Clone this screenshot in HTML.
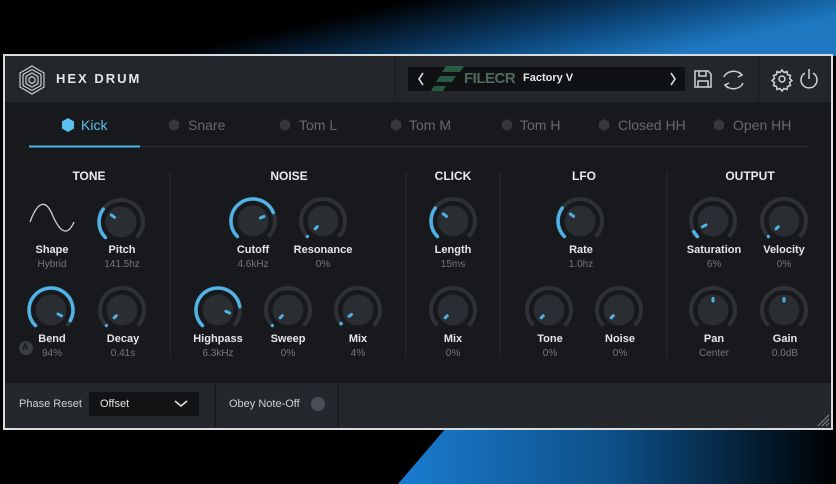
<!DOCTYPE html>
<html><head><meta charset="utf-8"><style>
*{margin:0;padding:0;box-sizing:border-box}
body{width:836px;height:484px;overflow:hidden;background:#000;font-family:"Liberation Sans",sans-serif;position:relative}
.t{position:absolute;white-space:nowrap}
.c{transform:translateX(-50%)}
.h{color:#e8eaec;font-weight:bold;font-size:12px}
.n{color:#e4e6e8;font-weight:bold;font-size:11px}
.v{color:#73787e;font-size:10px}
.tab{color:#656a70;font-size:14px}
</style></head><body>
<svg width="836" height="484" style="position:absolute;left:0;top:0">
<defs>
<linearGradient id="gt" x1="0" y1="0" x2="1" y2="0.3"><stop offset="0.45" stop-color="#000"/><stop offset="0.8" stop-color="#0d4a80"/><stop offset="1" stop-color="#1d78c0"/></linearGradient>
<linearGradient id="gb" x1="0" y1="0" x2="1" y2="0"><stop offset="0" stop-color="#1a7cd0"/><stop offset="0.5" stop-color="#0d4f86"/><stop offset="1" stop-color="#000"/></linearGradient>
<symbol id="kb" viewBox="-26 -26 52 52" overflow="visible">
<path d="M-15.56 15.56 A22 22 0 1 1 15.56 15.56" fill="none" stroke="#2e3135" stroke-width="4"/>
<circle r="15.5" fill="#2a2d31" stroke="none"/>
</symbol>
</defs>
<rect x="0" y="0" width="836" height="56" fill="url(#gt)"/>
<polygon points="398,484 446,428 836,428 836,484" fill="url(#gb)"/>
<rect x="3" y="54" width="830" height="376" fill="#d8dadc"/>
<rect x="5" y="56" width="826" height="372" fill="#17191c"/>
<rect x="5" y="56" width="826" height="46" fill="#23262a"/>
<rect x="5" y="383" width="826" height="45" fill="#24272b"/>
<line x1="215" y1="383" x2="215" y2="428" stroke="#1a1c1f" stroke-width="2"/>
<line x1="338" y1="383" x2="338" y2="428" stroke="#1a1c1f" stroke-width="2"/>
<line x1="395" y1="57" x2="395" y2="101" stroke="#1b1d20"/>
<line x1="759" y1="57" x2="759" y2="101" stroke="#1b1d20"/>
<g fill="none" stroke="#c9ccd0" stroke-width="1.2">
<polygon points="32,66 44,73 44,87 32,94 20,87 20,73"/>
<polygon points="32,69.5 41,74.5 41,85.5 32,90.5 23,85.5 23,74.5"/>
<polygon points="32,73 38,76.5 38,83.5 32,87 26,83.5 26,76.5"/>
<polygon points="32,76.5 35,78.5 35,81.5 32,83.5 29,81.5 29,78.5"/>
</g>
<rect x="408" y="67" width="277" height="24" fill="#0f1113"/>
<path d="M423 73 L419 79 L423 85" fill="none" stroke="#d6d8da" stroke-width="1.6"/>
<path d="M671 73 L675 79 L671 85" fill="none" stroke="#d6d8da" stroke-width="1.6"/>
<g fill="#2f6b4f" opacity="0.8"><polygon points="446,66 464,66 460,72 442,72"/><polygon points="440,76 456,76 452,82 436,82"/><polygon points="434,86 446,86 443,91 431,91"/></g>
<g fill="none" stroke="#d0d3d6" stroke-width="1.5">
<path d="M695 71 H708 L711 74 V87 H695 Z"/><path d="M699 71 V76 H706 V71"/><path d="M698 87 V81 H708 V87"/>
<path d="M724 77 A10 8 0 0 1 742 75"/><path d="M743 83 A10 8 0 0 1 725 85"/>
<path d="M739 72 L742 75 L738 77"/><path d="M728 88 L725 85 L729 83"/>
<circle cx="782" cy="79" r="3"/>
<path d="M782 70 l2 2.5 3-1 0.5 3 3 1 -1 3 2.5 2 -2.5 2 1 3 -3 1 -0.5 3 -3-1 -2 2.5 -2-2.5 -3 1 -0.5-3 -3-1 1-3 -2.5-2 2.5-2 -1-3 3-1 0.5-3 3 1z"/>
<path d="M805 73 A8 8 0 1 0 813 73"/><line x1="809" y1="69" x2="809" y2="79"/>
</g>
<line x1="29" y1="146.5" x2="808" y2="146.5" stroke="#2a2d31"/>
<line x1="29" y1="146.5" x2="140" y2="146.5" stroke="#4fb3e8" stroke-width="2"/>
<polygon points="68,118 74,121.5 74,128.5 68,132 62,128.5 62,121.5" fill="#5cc0f0"/>
<g fill="#34373c">
<polygon points="174,119 179,122 179,128 174,131 169,128 169,122"/>
<polygon points="285,119 290,122 290,128 285,131 280,128 280,122"/>
<polygon points="396,119 401,122 401,128 396,131 391,128 391,122"/>
<polygon points="507,119 512,122 512,128 507,131 502,128 502,122"/>
<polygon points="604,119 609,122 609,128 604,131 599,128 599,122"/>
<polygon points="719,119 724,122 724,128 719,131 714,128 714,122"/>
</g>
<g stroke="#2a2d31"><line x1="170" y1="172" x2="170" y2="358"/><line x1="406" y1="172" x2="406" y2="358"/><line x1="500" y1="172" x2="500" y2="358"/><line x1="667" y1="172" x2="667" y2="358"/></g>
<path d="M30 222 C38 200,46 200,52 214 S66 240,74 222" fill="none" stroke="#cfd2d5" stroke-width="1.3"/>
<!-- knob bases -->
<use href="#kb" x="95" y="196" width="52" height="52"/>
<use href="#kb" x="227" y="195" width="52" height="52"/>
<use href="#kb" x="297" y="195" width="52" height="52"/>
<use href="#kb" x="427" y="195" width="52" height="52"/>
<use href="#kb" x="554" y="195" width="52" height="52"/>
<use href="#kb" x="687" y="195" width="52" height="52"/>
<use href="#kb" x="758" y="195" width="52" height="52"/>
<use href="#kb" x="25" y="284" width="52" height="52"/>
<use href="#kb" x="96" y="284" width="52" height="52"/>
<use href="#kb" x="192" y="284" width="52" height="52"/>
<use href="#kb" x="262" y="284" width="52" height="52"/>
<use href="#kb" x="332" y="284" width="52" height="52"/>
<use href="#kb" x="427" y="284" width="52" height="52"/>
<use href="#kb" x="523" y="284" width="52" height="52"/>
<use href="#kb" x="593" y="284" width="52" height="52"/>
<use href="#kb" x="687" y="284" width="52" height="52"/>
<use href="#kb" x="758" y="284" width="52" height="52"/>
<g fill="none" stroke="#4fb3e8" stroke-width="3.5" stroke-linecap="round">
<path transform="translate(121,222)" d="M-15.56 15.56 A22 22 0 0 1 -17.8 -12.9"/>
<line transform="translate(121,222)" x1="-6.5" y1="-4.7" x2="-9.7" y2="-7.1" stroke-width="3"/>
<path transform="translate(253,221)" d="M-15.56 15.56 A22 22 0 1 1 20.3 -8.4"/>
<line transform="translate(253,221)" x1="7.4" y1="-3" x2="11" y2="-4.6" stroke-width="3"/>
<path transform="translate(453,221)" d="M-15.56 15.56 A22 22 0 0 1 -17.8 -12.9"/>
<line transform="translate(453,221)" x1="-6.5" y1="-4.7" x2="-9.7" y2="-7.1" stroke-width="3"/>
<path transform="translate(580,221)" d="M-15.56 15.56 A22 22 0 0 1 -17.8 -12.9"/>
<line transform="translate(580,221)" x1="-6.5" y1="-4.7" x2="-9.7" y2="-7.1" stroke-width="3"/>
<path transform="translate(713,221)" d="M-15.56 15.56 A22 22 0 0 1 -19.3 10.6"/>
<line transform="translate(713,221)" x1="-7" y1="3.9" x2="-10.5" y2="5.8" stroke-width="3"/>
<path transform="translate(51,310)" d="M-15.56 15.56 A22 22 0 1 1 19.3 10.6"/>
<line transform="translate(51,310)" x1="7" y1="3.9" x2="10.5" y2="5.8" stroke-width="3"/>
<path transform="translate(218,310)" d="M-15.56 15.56 A22 22 0 1 1 21.7 -3.4"/>
<line transform="translate(218,310)" x1="7.9" y1="1.2" x2="11.5" y2="3" stroke-width="3"/>
</g>
<g stroke="#4fb3e8" stroke-width="3" stroke-linecap="round" fill="#4fb3e8">
<g transform="translate(323,221)"><line x1="-5.7" y1="5.7" x2="-7.8" y2="7.8"/><circle cx="-15.6" cy="15.6" r="1.6" stroke="none"/></g>
<g transform="translate(784,221)"><line x1="-5.7" y1="5.7" x2="-7.8" y2="7.8"/><circle cx="-15.6" cy="15.6" r="1.6" stroke="none"/></g>
<g transform="translate(122,310)"><line x1="-5.7" y1="5.7" x2="-7.8" y2="7.8"/><circle cx="-15.6" cy="15.6" r="1.6" stroke="none"/></g>
<g transform="translate(288,310)"><line x1="-5.7" y1="5.7" x2="-7.8" y2="7.8"/><circle cx="-15.6" cy="15.6" r="1.6" stroke="none"/></g>
<g transform="translate(358,310)"><line x1="-6.5" y1="4.5" x2="-9" y2="6.2"/><circle cx="-17" cy="13.5" r="1.8" stroke="none"/></g>
<g transform="translate(453,310)"><line x1="-5.7" y1="5.7" x2="-7.8" y2="7.8"/></g>
<g transform="translate(549,310)"><line x1="-5.7" y1="5.7" x2="-7.8" y2="7.8"/></g>
<g transform="translate(619,310)"><line x1="-5.7" y1="5.7" x2="-7.8" y2="7.8"/></g>
<g transform="translate(713,310)"><line x1="0" y1="-9" x2="0" y2="-11.5"/></g>
<g transform="translate(784,310)"><line x1="0" y1="-9" x2="0" y2="-11.5"/></g>
</g>
<circle cx="26" cy="348" r="7" fill="#3a3d42"/>
<rect x="89" y="392" width="110" height="24" fill="#111315"/>
<path d="M175 401 L181 406 L187 401" fill="none" stroke="#e0e2e4" stroke-width="1.6"/>
<circle cx="318" cy="404" r="7" fill="#4a4e55"/>
<g stroke="#8a8d91" stroke-width="1"><line x1="818" y1="426" x2="829" y2="415"/><line x1="822" y1="426" x2="829" y2="419"/><line x1="826" y1="426" x2="829" y2="423"/></g>
</svg>
<div class="t" style="left:56px;top:71px;color:#e3e5e7;font-weight:bold;font-size:13px;letter-spacing:2px">HEX DRUM</div>
<div class="t" style="left:464px;top:70px;color:#6c8f7e;font-weight:bold;font-size:15px;opacity:.7;letter-spacing:-0.5px">FILECR</div>
<div class="t" style="left:523px;top:72px;color:#e6e8ea;font-size:11px;font-weight:bold">Factory V</div>
<div class="t" style="left:81px;top:117px;color:#5cc0f0;font-size:14px">Kick</div>
<div class="t tab" style="left:188px;top:117px">Snare</div>
<div class="t tab" style="left:299px;top:117px">Tom L</div>
<div class="t tab" style="left:409px;top:117px">Tom M</div>
<div class="t tab" style="left:520px;top:117px">Tom H</div>
<div class="t tab" style="left:618px;top:117px">Closed HH</div>
<div class="t tab" style="left:733px;top:117px">Open HH</div>
<div class="t h c" style="left:89px;top:169px">TONE</div>
<div class="t h c" style="left:289px;top:169px">NOISE</div>
<div class="t h c" style="left:453px;top:169px">CLICK</div>
<div class="t h c" style="left:584px;top:169px">LFO</div>
<div class="t h c" style="left:750px;top:169px">OUTPUT</div>
<div class="t n c" style="left:52px;top:244px">Shape</div><div class="t v c" style="left:52px;top:259px">Hybrid</div>
<div class="t n c" style="left:122px;top:244px">Pitch</div><div class="t v c" style="left:122px;top:259px">141.5hz</div>
<div class="t n c" style="left:253px;top:244px">Cutoff</div><div class="t v c" style="left:253px;top:259px">4.6kHz</div>
<div class="t n c" style="left:323px;top:244px">Resonance</div><div class="t v c" style="left:323px;top:259px">0%</div>
<div class="t n c" style="left:453px;top:244px">Length</div><div class="t v c" style="left:453px;top:259px">15ms</div>
<div class="t n c" style="left:581px;top:244px">Rate</div><div class="t v c" style="left:581px;top:259px">1.0hz</div>
<div class="t n c" style="left:714px;top:244px">Saturation</div><div class="t v c" style="left:714px;top:259px">6%</div>
<div class="t n c" style="left:784px;top:244px">Velocity</div><div class="t v c" style="left:784px;top:259px">0%</div>
<div class="t" style="left:22px;top:342px;color:#17191c;font-weight:bold;font-size:9px">A</div>
<div class="t n c" style="left:52px;top:333px">Bend</div><div class="t v c" style="left:52px;top:348px">94%</div>
<div class="t n c" style="left:123px;top:333px">Decay</div><div class="t v c" style="left:123px;top:348px">0.41s</div>
<div class="t n c" style="left:218px;top:333px">Highpass</div><div class="t v c" style="left:218px;top:348px">6.3kHz</div>
<div class="t n c" style="left:288px;top:333px">Sweep</div><div class="t v c" style="left:288px;top:348px">0%</div>
<div class="t n c" style="left:358px;top:333px">Mix</div><div class="t v c" style="left:358px;top:348px">4%</div>
<div class="t n c" style="left:453px;top:333px">Mix</div><div class="t v c" style="left:453px;top:348px">0%</div>
<div class="t n c" style="left:550px;top:333px">Tone</div><div class="t v c" style="left:550px;top:348px">0%</div>
<div class="t n c" style="left:620px;top:333px">Noise</div><div class="t v c" style="left:620px;top:348px">0%</div>
<div class="t n c" style="left:714px;top:333px">Pan</div><div class="t v c" style="left:714px;top:348px">Center</div>
<div class="t n c" style="left:785px;top:333px">Gain</div><div class="t v c" style="left:785px;top:348px">0.0dB</div>
<div class="t" style="left:19px;top:398px;color:#cfd2d5;font-size:11px">Phase Reset</div>
<div class="t" style="left:100px;top:398px;color:#e2e4e6;font-size:11px">Offset</div>
<div class="t" style="left:229px;top:398px;color:#cfd2d5;font-size:11px">Obey Note-Off</div>
</body></html>
